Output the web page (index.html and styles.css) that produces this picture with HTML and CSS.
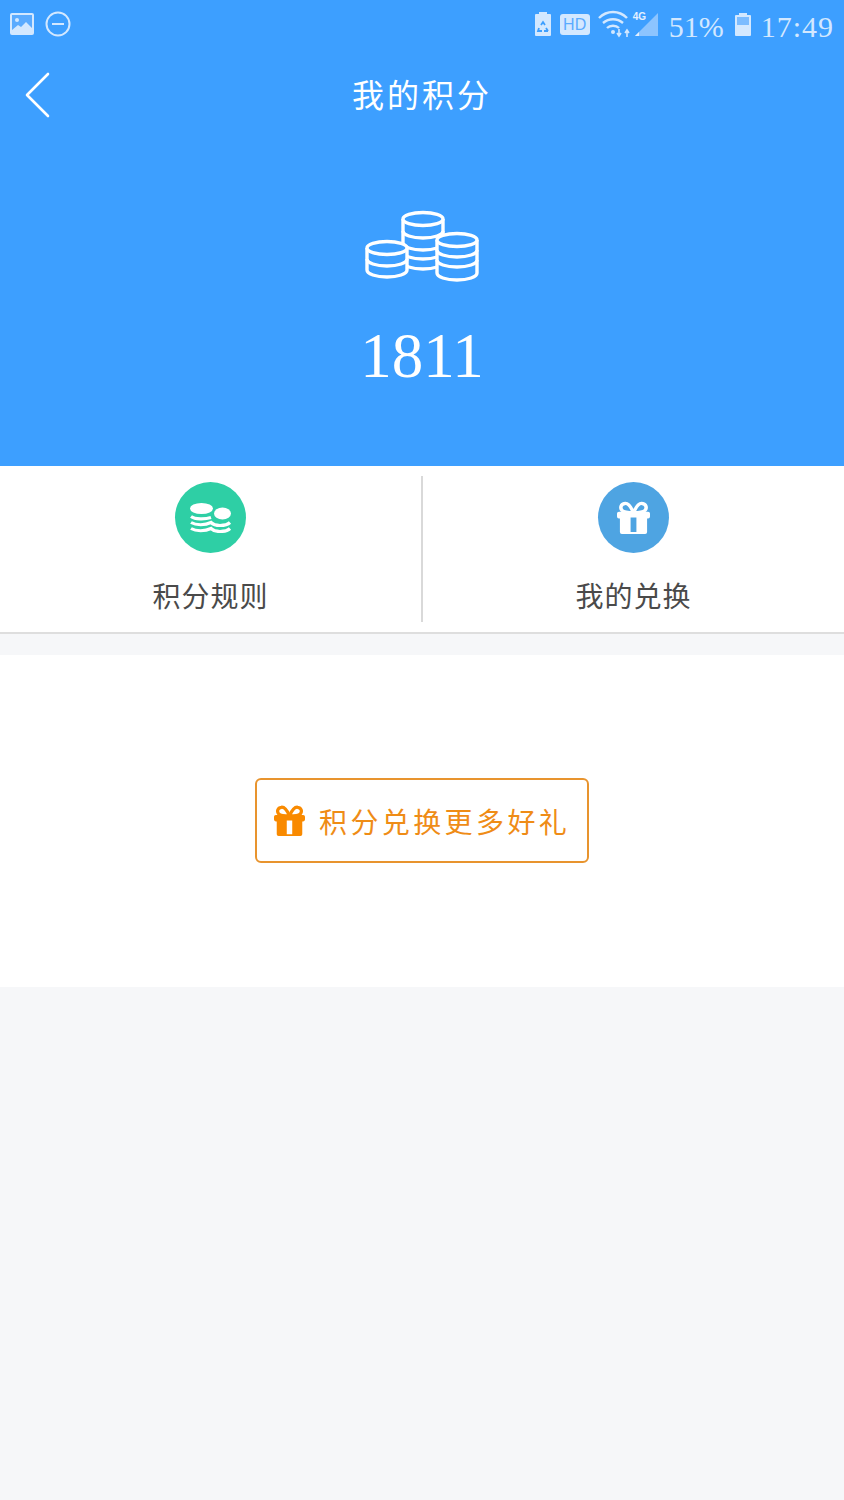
FILE: index.html
```html
<!DOCTYPE html>
<html lang="zh-CN">

<head>
    <meta charset="UTF-8">
    <meta name="viewport" content="width=device-width, initial-scale=1.0">
    <title>我的积分</title>
    <link rel="stylesheet" href="styles.css">
</head>

<body>
    <svg class="svg-defs" width="0" height="0">
        <symbol id="gift-shape" viewBox="0 0 34 34">
            <g fill="none" stroke="currentColor" stroke-width="3.6">
                <path d="M17 12C14 5 11 2 8 2.500 4 3 3 7 5 9.500 7 12 12 12 17 12z" />
                <path d="M17 12C20 5 23 2 26 2.500 30 3 31 7 29 9.500 27 12 22 12 17 12z" />
            </g>
            <path fill="currentColor" fill-rule="evenodd" d="M2 11h30a2 2 0 0 1 2 2v3a2 2 0 0 1-2 2h-1v14a2 2 0 0 1-2 2H5a2 2 0 0 1-2-2V18H2a2 2 0 0 1-2-2v-3a2 2 0 0 1 2-2zM14 17v15h6V17z" />
        </symbol>
    </svg>

    <header class="hero">
        <div class="status-bar">
            <div class="status-left">
                <svg width="26" height="24" viewBox="0 0 26 24">
                    <rect x="1" y="1" width="24" height="22" rx="2" fill="#d3e8ff" />
                    <rect x="3" y="3" width="20" height="18" fill="#5aabff" />
                    <circle cx="8" cy="8" r="2" fill="#d3e8ff" />
                    <path d="M3 18l6-5 3 2 5-5 6 6v5H3z" fill="#d3e8ff" />
                </svg>
                <svg width="26" height="26" viewBox="0 0 26 26">
                    <circle cx="13" cy="13" r="11.5" fill="none" stroke="#d3e8ff" stroke-width="2" />
                    <path d="M7 13h12" stroke="#d3e8ff" stroke-width="2" />
                </svg>
            </div>
            <div class="status-right">
                <svg class="st-recycle" width="18" height="26" viewBox="0 0 18 26">
                    <path d="M5 3V1h8v2h3a1 1 0 0 1 1 1v20a1 1 0 0 1-1 1H2a1 1 0 0 1-1-1V4a1 1 0 0 1 1-1z" fill="#d3e8ff" />
                    <path d="M7 14l2-3 2 3M5 17l-1 3h4M14 20h-4M12 17l2 3" stroke="#3d9fff" stroke-width="1.8" fill="none" />
                </svg>
                <span class="st-hd">HD</span>
                <svg class="st-wifi" width="36" height="28" viewBox="0 0 36 28">
                    <path d="M1 8c8-8 20-8 28 0M5 13c6-5 14-5 20 0M9 18c3-3 9-3 12 0" stroke="#d3e8ff" stroke-width="2.4" fill="none" />
                    <circle cx="15" cy="22" r="2" fill="#d3e8ff" />
                    <path d="M21 19v6M19 23l2 3 2-3M29 27v-6M27 23l2-3 2 3" stroke="#d3e8ff" stroke-width="1.6" fill="none" />
                </svg>
                <div class="st-signal">
                    <svg width="26" height="26" viewBox="0 0 26 26">
                        <path d="M25 2v23H2z" fill="#8cc4ff" />
                        <path d="M2 25l4-4v4z" fill="#e3f0ff" />
                    </svg>
                    <span class="st-4g">4G</span>
                </div>
                <span class="st-text st-batt-text">51%</span>
                <svg class="st-batt" width="18" height="26" viewBox="0 0 18 26">
                    <path d="M5 3V1h8v2h3a1 1 0 0 1 1 1v19a1 1 0 0 1-1 1H2a1 1 0 0 1-1-1V4a1 1 0 0 1 1-1z" fill="#d3e8ff" />
                    <rect x="3" y="5" width="12" height="8" fill="#7cbcff" />
                </svg>
                <span class="st-text st-time">17:49</span>
            </div>
        </div>

        <nav class="nav-bar">
            <svg class="back-icon" width="28" height="48" viewBox="0 0 28 48">
                <path d="M24 3L3 24l21 21" fill="none" stroke="#fff" stroke-width="2.6" stroke-linecap="round" stroke-linejoin="round" />
            </svg>
            <h1 class="nav-title">我的积分</h1>
        </nav>

        <div class="points">
            <svg class="coins-icon" width="114" height="72" viewBox="0 0 114 72">
                <g fill="none" stroke="#fff" stroke-width="3.4">
                    <path d="M38 9v43c0 4 9 7 20 7s20-3 20-7V9" />
                    <ellipse cx="58" cy="9" rx="20" ry="6.500" fill="#3d9fff" />
                    <path d="M38 21c0 4 9 7 20 7s20-3 20-7M38 33c0 4 9 7 20 7s20-3 20-7M38 42c0 4 9 7 20 7s20-3 20-7" />
                    <path d="M2 38v22c0 4 9 7 20 7s20-3 20-7V38" fill="#3d9fff" />
                    <ellipse cx="22" cy="38" rx="20" ry="6.500" fill="#3d9fff" />
                    <path d="M2 49c0 4 9 7 20 7s20-3 20-7" />
                    <path d="M72 30v33c0 4 9 7 20 7s20-3 20-7V30" fill="#3d9fff" />
                    <ellipse cx="92" cy="30" rx="20" ry="6.500" fill="#3d9fff" />
                    <path d="M72 40c0 4 9 7 20 7s20-3 20-7M72 50c0 4 9 7 20 7s20-3 20-7" />
                </g>
            </svg>
            <div class="points-num">1811</div>
        </div>
    </header>

    <section class="tabs">
        <div class="tab">
            <div class="tab-icon tab-icon-green">
                <svg width="42" height="30" viewBox="0 0 42 30">
                    <g fill="#fff">
                        <ellipse cx="11.500" cy="5.500" rx="11.500" ry="5.500" />
                        <ellipse cx="32.500" cy="10.500" rx="8.500" ry="6" />
                    </g>
                    <path d="M1 13.500c4 3 14 3 20 1M1 19.500c5 3 14 3 20 0 2 2 5 3 9 3 4 0 8-1 10-3M1 25.500c5 3 14 3 20 0 2 2 5 3 9 3 4 0 8-1 10-3" fill="none" stroke="#fff" stroke-width="3.2" />
                </svg>
            </div>
            <div class="tab-label">积分规则</div>
        </div>
        <div class="tab tab-right">
            <div class="tab-icon tab-icon-blue">
                <svg class="gift-white" width="33" height="33">
                    <use href="#gift-shape" />
                </svg>
            </div>
            <div class="tab-label">我的兑换</div>
        </div>
    </section>

    <section class="exchange">
        <button class="exchange-btn" type="button">
            <svg class="gift-orange" width="31" height="31">
                <use href="#gift-shape" />
            </svg>
            <span>积分兑换更多好礼</span>
        </button>
    </section>
</body>

</html>
```

FILE: styles.css
```css
* {
    box-sizing: border-box;
}

body {
    margin: 0;
    min-height: 1500px;
    background-color: #f6f7f9;
    font-family: "Liberation Serif", "Noto Sans CJK SC", serif;
}

.svg-defs {
    display: block;
    height: 0;
}

.hero {
    height: 466px;
    background-color: #3d9fff;
    color: #fff;
}

/* status bar */
.status-bar {
    height: 48px;
    padding: 0 10px 0 9px;
    display: flex;
    justify-content: space-between;
    align-items: center;
}

.status-left {
    display: flex;
    align-items: center;
    gap: 10px;
}

.status-right {
    display: flex;
    align-items: center;
    color: #d3e8ff;
}

.st-hd {
    width: 30px;
    height: 21px;
    margin-left: 8px;
    background-color: #d3e8ff;
    border-radius: 3px;
    color: #5aabff;
    font-family: "Liberation Sans", sans-serif;
    font-size: 16px;
    line-height: 21px;
    text-align: center;
}

.st-wifi {
    margin-left: 8px;
}

.st-signal {
    position: relative;
    width: 26px;
    height: 26px;
    margin-left: -1px;
}

.st-4g {
    position: absolute;
    top: 0;
    left: 0;
    font-family: "Liberation Sans", sans-serif;
    font-size: 10px;
    font-weight: bold;
    color: #e3f0ff;
}

.st-text {
    margin-top: 5px;
    font-size: 30px;
    line-height: 43px;
}

.st-batt-text {
    margin-left: 10px;
}

.st-batt {
    margin: 2px 9px 0 10px;
}

.st-time {
    letter-spacing: 1px;
}

/* nav */
.nav-bar {
    height: 94px;
    padding-left: 24px;
    display: flex;
    align-items: center;
    position: relative;
}

.nav-title {
    position: absolute;
    left: 0;
    right: 0;
    margin: 0;
    padding-bottom: 4px;
    text-align: center;
    font-family: "Noto Sans CJK SC", sans-serif;
    font-size: 32px;
    font-weight: 400;
    letter-spacing: 3px;
}

.points {
    padding-top: 68px;
    display: flex;
    flex-direction: column;
    align-items: center;
}

.points-num {
    margin-top: 36px;
    font-size: 63px;
    line-height: 76px;
}

/* tabs */
.tabs {
    height: 168px;
    padding: 10px 0;
    background-color: #fff;
    border-bottom: 2px solid #dedede;
    display: flex;
}

.tab {
    flex: 1;
    display: flex;
    flex-direction: column;
    align-items: center;
    padding-top: 6px;
}

.tab-right {
    border-left: 2px solid #d9d9d9;
}

.tab-icon {
    width: 71px;
    height: 71px;
    border-radius: 50%;
    display: flex;
    justify-content: center;
    align-items: center;
}

.tab-icon-green {
    background-color: #2ecfa5;
}

.tab-icon-blue {
    background-color: #4ea4e2;
}

.gift-white {
    color: #fff;
}

.gift-orange {
    color: #f98a00;
}

.tab-label {
    margin-top: 22px;
    font-family: "Noto Sans CJK SC", sans-serif;
    font-size: 28px;
    line-height: 40px;
    letter-spacing: 1px;
    color: #4a4a4a;
}

/* exchange */
.exchange {
    height: 332px;
    margin-top: 21px;
    padding-top: 123px;
    background-color: #fff;
    display: flex;
    justify-content: center;
    align-items: flex-start;
}

.exchange-btn {
    width: 334px;
    height: 85px;
    padding: 0 0 0 17px;
    background-color: #fff;
    border: 2px solid #e8942e;
    border-radius: 6px;
    color: #ef8c16;
    font-family: "Noto Sans CJK SC", sans-serif;
    font-size: 28px;
    display: flex;
    align-items: center;
    gap: 14px;
    letter-spacing: 3.4px;
}
```
